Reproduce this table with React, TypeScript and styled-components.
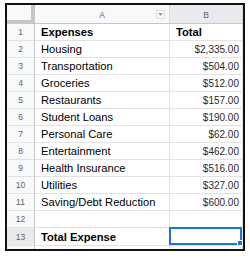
import styled, { createGlobalStyle } from 'styled-components';

const GlobalStyle = createGlobalStyle`
  html, body {
    margin: 0;
    padding: 0;
    background: #ffffff;
  }
  * {
    box-sizing: border-box;
  }
`;

const expenses: [string, string][] = [
  ['Housing', '$2,335.00'],
  ['Transportation', '$504.00'],
  ['Groceries', '$512.00'],
  ['Restaurants', '$157.00'],
  ['Student Loans', '$190.00'],
  ['Personal Care', '$62.00'],
  ['Entertainment', '$462.00'],
  ['Health Insurance', '$516.00'],
  ['Utilities', '$327.00'],
  ['Saving/Debt Reduction', '$600.00'],
];

const Page = styled.div`
  padding: 3px 5px;
  width: 250px;
  height: 258px;
`;

const Sheet = styled.div`
  width: 240px;
  height: 248px;
  border: 2px solid #111111;
  overflow: hidden;
  font-family: 'Liberation Sans', Arial, sans-serif;
  background: #ffffff;
`;

const Row = styled.div<{ $h: number }>`
  display: grid;
  grid-template-columns: 28px 135px 1fr;
  height: ${({ $h }) => $h}px;
`;

const Corner = styled.div`
  background: #f8f9fa;
  border-right: 4px solid #c4c7c5;
  border-bottom: 4px solid #c4c7c5;
`;

const ColHead = styled.div<{ $active?: boolean }>`
  position: relative;
  display: flex;
  align-items: center;
  justify-content: center;
  padding-top: 1px;
  background: ${({ $active }) => ($active ? '#e8eaed' : '#f8f9fa')};
  border-right: 1px solid #d9d9d9;
  border-bottom: 1px solid #c4c7c5;
  color: #5f6368;
  font-size: 8.5px;
`;

const FilterButton = styled.span`
  position: absolute;
  right: 4px;
  top: 5px;
  width: 9px;
  height: 9px;
  border: 1px solid #e0e0e0;
  background: #fbfbfb;
  display: flex;
  align-items: center;
  justify-content: center;
`;

const RowHead = styled.div<{ $active?: boolean }>`
  display: flex;
  align-items: center;
  justify-content: center;
  background: ${({ $active }) => ($active ? '#e8eaed' : '#f8f9fa')};
  border-right: 1px solid #c4c7c5;
  border-bottom: 1px solid #e2e2e2;
  color: #5f6368;
  font-size: 8.5px;
`;

const Cell = styled.div<{ $bold?: boolean; $right?: boolean; $selected?: boolean }>`
  position: relative;
  display: flex;
  align-items: center;
  justify-content: ${({ $right }) => ($right ? 'flex-end' : 'flex-start')};
  padding: 0 3px 0 6px;
  border-right: 1px solid #e2e2e2;
  border-bottom: 1px solid #e2e2e2;
  font-size: ${({ $right }) => ($right ? '10px' : '11.2px')};
  font-weight: ${({ $bold }) => ($bold ? 700 : 400)};
  color: ${({ $right }) => ($right ? '#2a2a2a' : '#000000')};
  white-space: nowrap;
  z-index: ${({ $selected }) => ($selected ? 2 : 1)};
`;

const Selection = styled.div`
  position: absolute;
  left: -1px;
  top: -1px;
  right: 0;
  bottom: 0;
  border: 2px solid #1a73e8;
`;

const Handle = styled.span`
  position: absolute;
  right: -3px;
  bottom: -3px;
  width: 6px;
  height: 6px;
  background: #1a73e8;
  border: 1px solid #ffffff;
`;

const ROW_H = 17;

export default function App() {
  return (
    <>
      <GlobalStyle />
      <Page>
        <Sheet>
          <Row $h={19}>
            <Corner />
            <ColHead>
              A
              <FilterButton>
                <svg width="5" height="3" viewBox="0 0 5 3">
                  <path d="M0 0h5L2.5 3z" fill="#9aa0a6" />
                </svg>
              </FilterButton>
            </ColHead>
            <ColHead $active>B</ColHead>
          </Row>
          <Row $h={ROW_H}>
            <RowHead>1</RowHead>
            <Cell $bold>Expenses</Cell>
            <Cell $bold>Total</Cell>
          </Row>
          {expenses.map(([name, amount], i) => (
            <Row $h={ROW_H} key={name}>
              <RowHead>{i + 2}</RowHead>
              <Cell>{name}</Cell>
              <Cell $right>{amount}</Cell>
            </Row>
          ))}
          <Row $h={ROW_H}>
            <RowHead>12</RowHead>
            <Cell />
            <Cell />
          </Row>
          <Row $h={18}>
            <RowHead $active>13</RowHead>
            <Cell $bold>Total Expense</Cell>
            <Cell $selected>
              <Selection>
                <Handle />
              </Selection>
            </Cell>
          </Row>
          <Row $h={ROW_H}>
            <RowHead>14</RowHead>
            <Cell />
            <Cell />
          </Row>
        </Sheet>
      </Page>
    </>
  );
}
